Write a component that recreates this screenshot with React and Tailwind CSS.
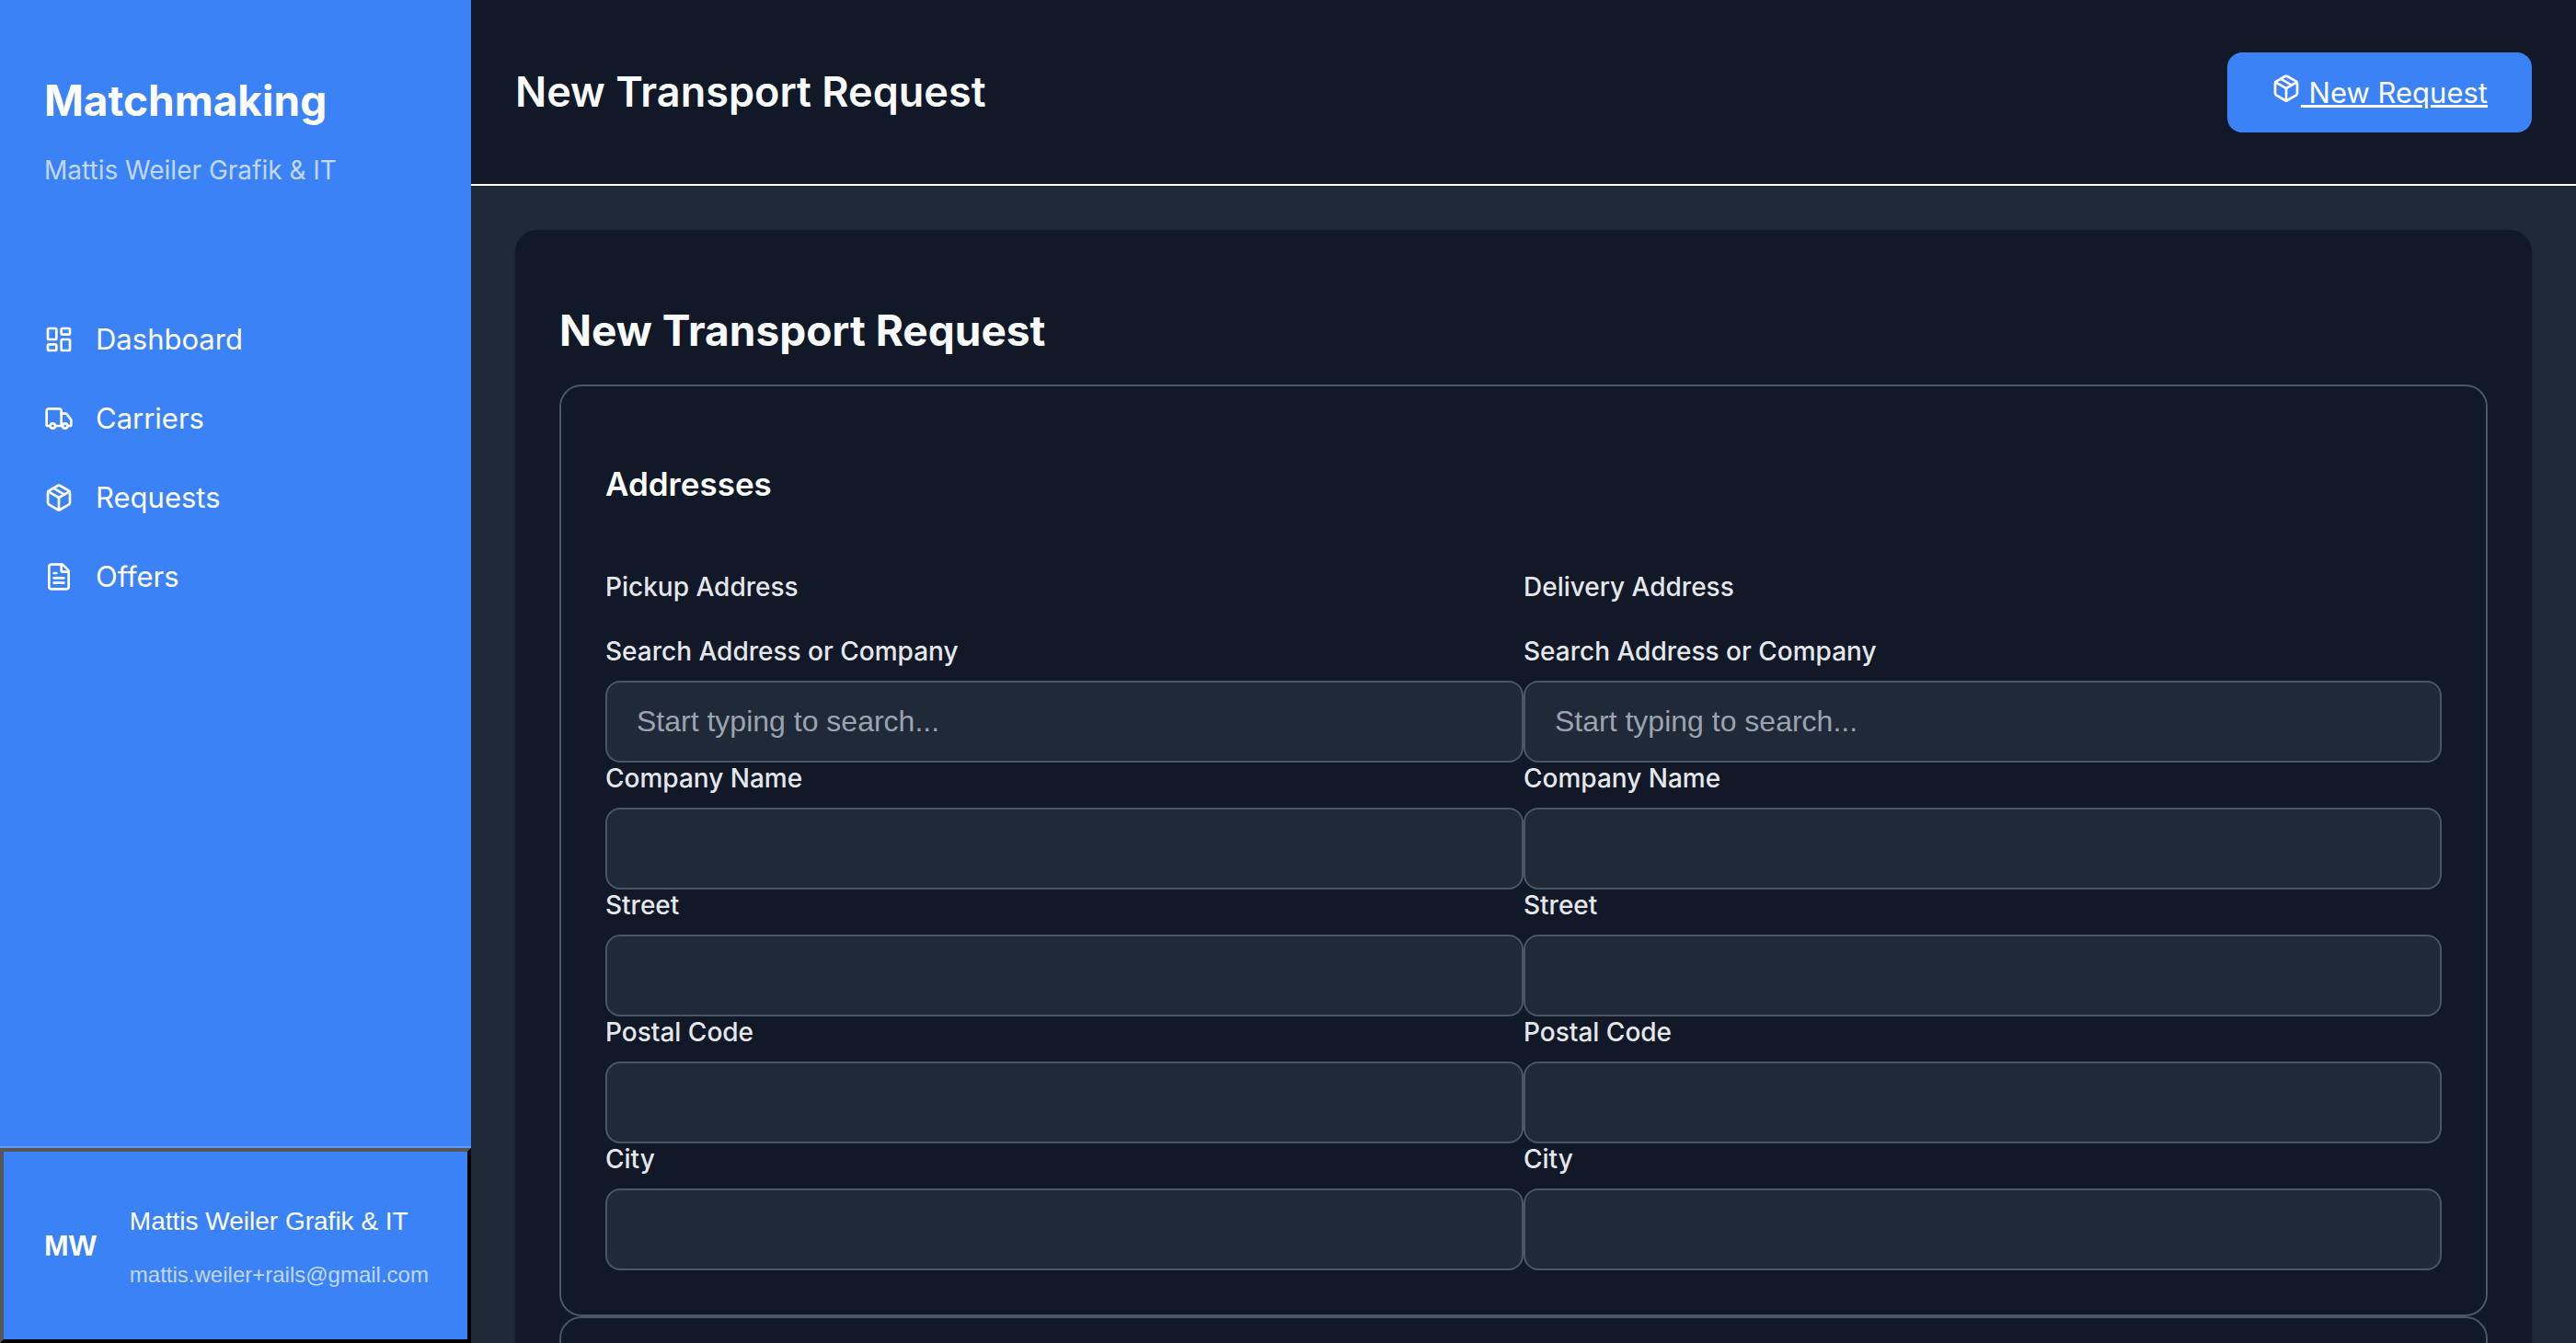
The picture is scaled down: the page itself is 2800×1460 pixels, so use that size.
import { LayoutDashboard, Truck, Package, FileText } from "lucide-react";

const navItems = [
  { label: "Dashboard", Icon: LayoutDashboard },
  { label: "Carriers", Icon: Truck },
  { label: "Requests", Icon: Package },
  { label: "Offers", Icon: FileText },
];

const addressFields = [
  { name: "search", label: "Search Address or Company", placeholder: "Start typing to search..." },
  { name: "company", label: "Company Name" },
  { name: "street", label: "Street" },
  { name: "postal", label: "Postal Code" },
  { name: "city", label: "City" },
];

function Sidebar() {
  return (
    <aside className="flex w-[512px] shrink-0 flex-col bg-[#3b82f6] text-white">
      <div className="px-12 pt-20">
        <p className="text-[46px] leading-[58px] font-bold">Matchmaking</p>
        <p className="mt-6 text-[28px] leading-[46px] text-white/70">Mattis Weiler Grafik &amp; IT</p>
      </div>
      <nav className="mt-[118px] flex flex-1 flex-col">
        {navItems.map(({ label, Icon }) => (
          <a key={label} href="#" className="flex h-[86px] items-center gap-6 px-12 text-[31px] leading-[54px]">
            <Icon size={32} />
            {label}
          </a>
        ))}
      </nav>
      <div className="border-t-2 border-white/20">
        <button
          type="button"
          className="flex h-[212px] w-full items-center gap-9 border-4 border-t-[#555555] border-r-black border-b-black border-l-[#555555] pl-11 text-left font-['Liberation_Sans',Arial,sans-serif]"
        >
          <span className="text-[32px] font-bold">MW</span>
          <span className="flex flex-col gap-3 pt-1">
            <span className="text-[28px] leading-[48px]">Mattis Weiler Grafik &amp; IT</span>
            <span className="text-[24px] leading-[44px] text-white/70">mattis.weiler+rails@gmail.com</span>
          </span>
        </button>
      </div>
    </aside>
  );
}

function AddressColumn({ id, title }) {
  return (
    <div className="flex-1 text-[28px] leading-[34px] font-medium text-gray-200">
      <h4 className="mb-9">{title}</h4>
      {addressFields.map((field) => (
        <div key={field.name}>
          <label htmlFor={`${id}-${field.name}`} className="block pb-[15px]">
            {field.label}
          </label>
          <input
            id={`${id}-${field.name}`}
            type="text"
            placeholder={field.placeholder}
            className="block h-[89px] w-full rounded-2xl border-2 border-[#4b5563] bg-[#1f2937] px-8 font-['Liberation_Sans',Arial,sans-serif] text-[32px] font-normal text-white placeholder:text-[#9ca3af]"
          />
        </div>
      ))}
    </div>
  );
}

export default function App() {
  return (
    <div className="flex h-screen overflow-hidden bg-[#1f2937] font-[Inter,sans-serif]">
      <Sidebar />
      <div className="flex min-w-0 flex-1 flex-col">
        <header className="flex h-[202px] shrink-0 items-center justify-between border-b-2 border-white bg-[#111827] px-12">
          <h1 className="text-[45px] leading-[60px] font-semibold text-gray-50">New Transport Request</h1>
          <a
            href="#"
            className="rounded-2xl bg-[#3b82f6] px-12 py-4 text-[31px] leading-[55px] whitespace-pre text-white underline decoration-3"
          >
            <Package size={32} className="inline align-baseline" />
            {" New Request"}
          </a>
        </header>
        <main className="flex-1 overflow-hidden p-12">
          <section className="rounded-3xl bg-[#111827] px-12 pt-20 pb-12 shadow-sm">
            <h2 className="mb-[30px] text-[46px] leading-[58px] font-bold text-gray-50">New Transport Request</h2>
            <form>
              <section className="rounded-3xl border-2 border-[#4b5563] p-12 pt-[84px]">
                <h3 className="mb-[73px] text-[35px] leading-[44px] font-semibold text-white">Addresses</h3>
                <div className="flex">
                  <AddressColumn id="pickup" title="Pickup Address" />
                  <AddressColumn id="delivery" title="Delivery Address" />
                </div>
              </section>
              <section className="h-96 rounded-3xl border-2 border-[#4b5563]" />
            </form>
          </section>
        </main>
      </div>
    </div>
  );
}
